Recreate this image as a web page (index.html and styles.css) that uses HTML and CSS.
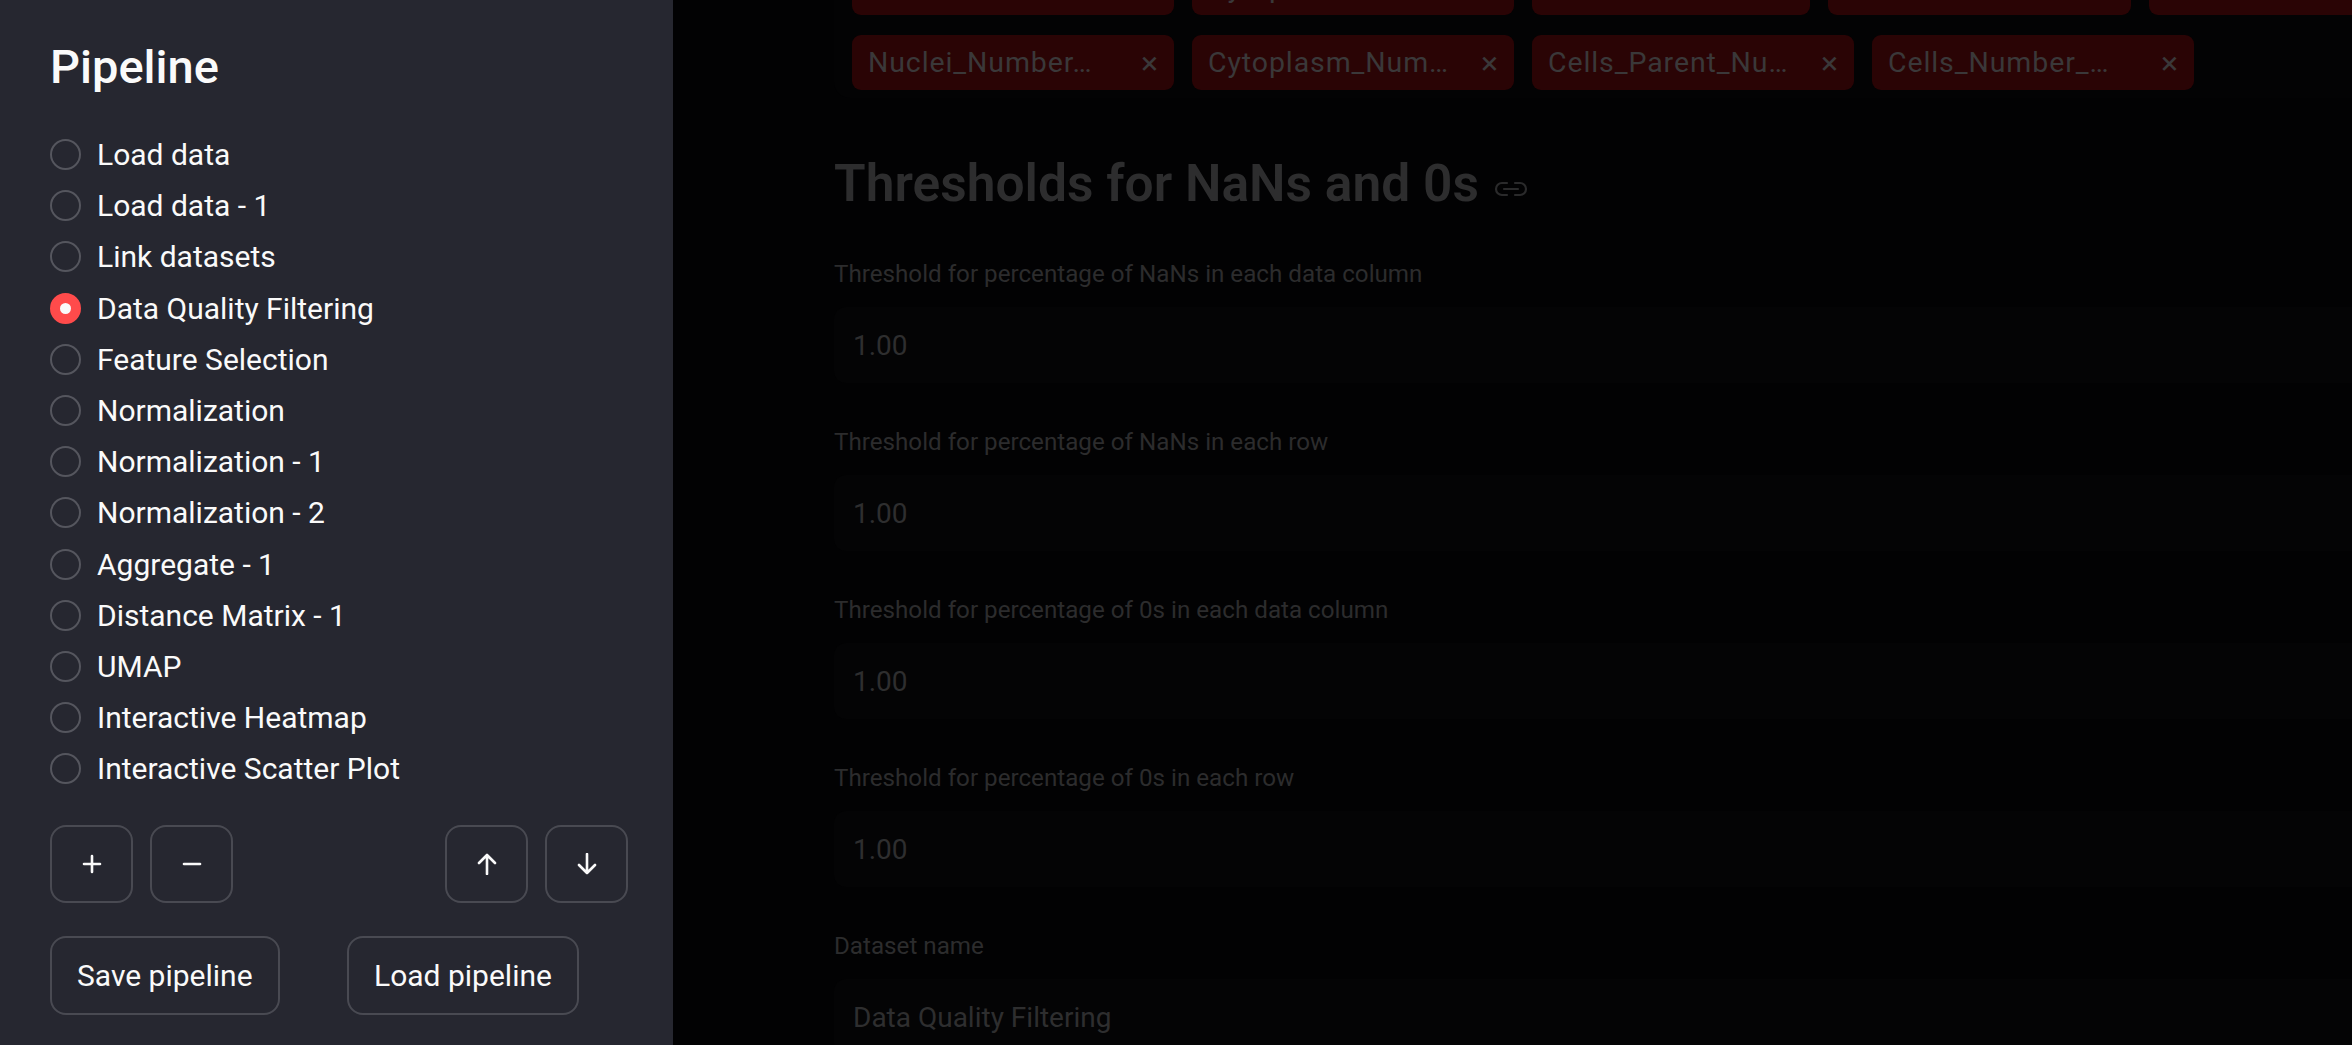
FILE: index.html
```html
<!DOCTYPE html>
<html lang="en">
<head>
<meta charset="utf-8">
<title>Pipeline</title>
<link rel="stylesheet" href="styles.css">
</head>
<body>
<div class="app">
  <aside class="sidebar">
    <h2 class="side-title">Pipeline</h2>
    <ul class="radio-list">
      <li class="radio"><span class="dot"></span><span class="rlabel">Load data</span></li>
      <li class="radio"><span class="dot"></span><span class="rlabel">Load data - 1</span></li>
      <li class="radio"><span class="dot"></span><span class="rlabel">Link datasets</span></li>
      <li class="radio selected"><span class="dot"></span><span class="rlabel">Data Quality Filtering</span></li>
      <li class="radio"><span class="dot"></span><span class="rlabel">Feature Selection</span></li>
      <li class="radio"><span class="dot"></span><span class="rlabel">Normalization</span></li>
      <li class="radio"><span class="dot"></span><span class="rlabel">Normalization - 1</span></li>
      <li class="radio"><span class="dot"></span><span class="rlabel">Normalization - 2</span></li>
      <li class="radio"><span class="dot"></span><span class="rlabel">Aggregate - 1</span></li>
      <li class="radio"><span class="dot"></span><span class="rlabel">Distance Matrix - 1</span></li>
      <li class="radio"><span class="dot"></span><span class="rlabel">UMAP</span></li>
      <li class="radio"><span class="dot"></span><span class="rlabel">Interactive Heatmap</span></li>
      <li class="radio"><span class="dot"></span><span class="rlabel">Interactive Scatter Plot</span></li>
    </ul>
    <div class="icon-row">
      <div class="group">
        <button class="ibtn" aria-label="Add"><svg viewBox="0 0 20 20" width="20" height="20"><path d="M10 2v16M2 10h16"/></svg></button>
        <button class="ibtn" aria-label="Remove"><svg viewBox="0 0 20 20" width="20" height="20"><path d="M2 10h16"/></svg></button>
      </div>
      <div class="group">
        <button class="ibtn" aria-label="Move up"><svg viewBox="0 0 20 22" width="20" height="22"><path d="M10 21V2M2 10l8-8 8 8"/></svg></button>
        <button class="ibtn" aria-label="Move down"><svg viewBox="0 0 20 22" width="20" height="22"><path d="M10 1v19M2 12l8 8 8-8"/></svg></button>
      </div>
    </div>
    <div class="save-row">
      <div class="col"><button class="tbtn">Save pipeline</button></div>
      <div class="col"><button class="tbtn">Load pipeline</button></div>
    </div>
  </aside>
  <main class="main">
    <div class="content">
      <div class="multiselect">
        <div class="tag-row">
          <span class="tag"><span class="ttext">Nuclei_AreaSh_…</span><span class="x">×</span></span>
          <span class="tag"><span class="ttext">Cytoplasm_Ar_…</span><span class="x">×</span></span>
          <span class="tag w278"><span class="ttext">Cells_Area_…</span><span class="x">×</span></span>
          <span class="tag w303"><span class="ttext">Nuclei_Int_e…</span><span class="x">×</span></span>
          <span class="tag"><span class="ttext">Cells_Inten_…</span><span class="x">×</span></span>
        </div>
        <div class="tag-row">
          <span class="tag"><span class="ttext">Nuclei_Number…</span><span class="x">×</span></span>
          <span class="tag"><span class="ttext">Cytoplasm_Num…</span><span class="x">×</span></span>
          <span class="tag"><span class="ttext">Cells_Parent_Nu…</span><span class="x">×</span></span>
          <span class="tag"><span class="ttext">Cells_Number_…</span><span class="x">×</span></span>
        </div>
      </div>
      <h3 class="section-title">Thresholds for NaNs and 0s <svg class="link-icon" viewBox="0 0 36 18" width="36" height="18"><path d="M14 3H9a6 6 0 0 0 0 12h5M22 3h5a6 6 0 0 1 0 12h-5M11 9h14"/></svg></h3>
      <div class="field">
        <label class="flabel">Threshold for percentage of NaNs in each data column</label>
        <div class="input">1.00</div>
      </div>
      <div class="field">
        <label class="flabel">Threshold for percentage of NaNs in each row</label>
        <div class="input">1.00</div>
      </div>
      <div class="field">
        <label class="flabel">Threshold for percentage of 0s in each data column</label>
        <div class="input">1.00</div>
      </div>
      <div class="field">
        <label class="flabel">Threshold for percentage of 0s in each row</label>
        <div class="input">1.00</div>
      </div>
      <div class="field">
        <label class="flabel">Dataset name</label>
        <div class="input">Data Quality Filtering</div>
      </div>
    </div>
  </main>
</div>
</body>
</html>
```

FILE: styles.css
```css
* { box-sizing: border-box; }
html, body {
  margin: 0;
  padding: 0;
  height: 1045px;
  overflow: hidden;
  background: #020203;
  font-family: Roboto, "Noto Sans", sans-serif;
}
.app {
  display: flex;
  height: 1045px;
  overflow: hidden;
}
.sidebar {
  flex: 0 0 673px;
  width: 673px;
  height: 1045px;
  background: #262730;
  padding: 39px 45px 0 50px;
  color: #fafafa;
}
.side-title {
  margin: 0 0 34px 0;
  font-size: 47px;
  line-height: 56px;
  height: 56px;
  font-weight: 500;
  color: #fafafa;
}
.radio-list {
  list-style: none;
  margin: 0;
  padding: 0;
}
.radio {
  display: flex;
  align-items: center;
  height: 51.2px;
}
.dot {
  flex: 0 0 31px;
  width: 31px;
  height: 31px;
  border-radius: 50%;
  border: 2px solid #55565e;
  margin-right: 16px;
  display: flex;
  align-items: center;
  justify-content: center;
}
.radio.selected .dot {
  background: #ff4b4b;
  border-color: #ff4b4b;
}
.radio.selected .dot::after {
  content: "";
  width: 11px;
  height: 11px;
  border-radius: 50%;
  background: #fafafa;
}
.rlabel {
  font-size: 30px;
  line-height: 51.2px;
  color: #fafafa;
}
.icon-row {
  display: flex;
  justify-content: space-between;
  margin-top: 31px;
}
.group {
  display: flex;
  gap: 17px;
}
.ibtn {
  width: 83px;
  height: 78px;
  border: 2px solid #494a52;
  border-radius: 16px;
  background: #262730;
  display: flex;
  align-items: center;
  justify-content: center;
  padding: 0;
}
.ibtn svg {
  fill: none;
  stroke: #fafafa;
  stroke-width: 2.6;
  stroke-linecap: round;
  stroke-linejoin: round;
}
.save-row {
  display: grid;
  grid-template-columns: 281px 281px;
  column-gap: 16px;
  margin-top: 33px;
}
.tbtn {
  height: 79px;
  padding: 0 25px;
  border: 2px solid #494a52;
  border-radius: 16px;
  background: #262730;
  color: #fafafa;
  font-family: Roboto, "Noto Sans", sans-serif;
  font-size: 30px;
}
.main {
  flex: 1 1 auto;
  height: 1045px;
  overflow: hidden;
  background: #020203;
}
.content {
  margin-left: 161px;
  width: 1700px;
}
.multiselect {
  margin-top: -48px;
  padding: 8px 18px 8px 18px;
  background: #030304;
  border-radius: 16px;
  display: flex;
  flex-direction: column;
  gap: 20px;
}
.tag-row {
  display: flex;
  gap: 18px;
  white-space: nowrap;
}
.tag {
  flex: 0 0 322px;
  width: 322px;
  height: 55px;
  border-radius: 9px;
  background: #2a0405;
  color: #3a3839;
  font-size: 28.5px;
  display: flex;
  align-items: center;
  justify-content: space-between;
  padding: 0 16px 0 16px;
}
.tag.w278 { flex-basis: 278px; width: 278px; }
.tag.w303 { flex-basis: 303px; width: 303px; }
.ttext {
  overflow: hidden;
  letter-spacing: 0.9px;
}
.x {
  font-size: 32px;
  color: #3a3839;
}
.section-title {
  margin: 55px 0 0 0;
  font-size: 51.5px;
  line-height: 62px;
  height: 62px;
  font-weight: 600;
  color: #2d2d2e;
  display: flex;
  align-items: center;
  white-space: nowrap;
}
.link-icon {
  margin-left: 14px;
  margin-top: 10px;
  fill: none;
  stroke: #2a2a2b;
  stroke-width: 2.2;
  stroke-linecap: round;
}
.field {
  margin-top: 37px;
}
.flabel {
  display: block;
  height: 44px;
  line-height: 44px;
  font-size: 24.2px;
  color: #2c2c2d;
  margin-bottom: 11px;
}
.input {
  height: 76px;
  line-height: 78px;
  background: #040405;
  border-radius: 12px;
  padding-left: 19px;
  font-size: 28px;
  color: #2e2e2f;
}
```
